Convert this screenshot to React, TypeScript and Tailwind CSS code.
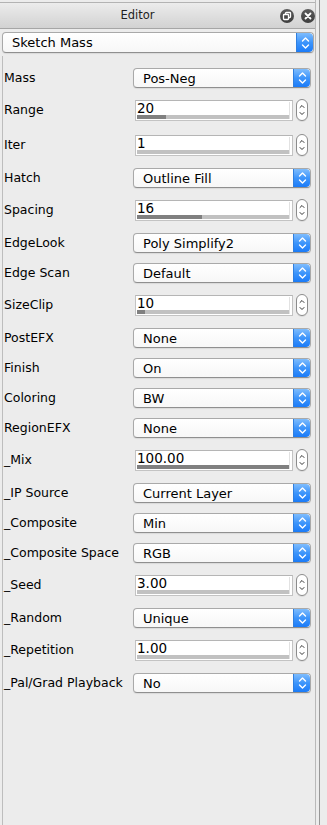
import React from "react";

type Row =
  | { label: string; type: "dd"; value: string }
  | { label: string; type: "spin"; value: string; fill: number };

const rows: Row[] = [
  { label: "Mass", type: "dd", value: "Pos-Neg" },
  { label: "Range", type: "spin", value: "20", fill: 19 },
  { label: "Iter", type: "spin", value: "1", fill: 0 },
  { label: "Hatch", type: "dd", value: "Outline Fill" },
  { label: "Spacing", type: "spin", value: "16", fill: 43 },
  { label: "EdgeLook", type: "dd", value: "Poly Simplify2" },
  { label: "Edge Scan", type: "dd", value: "Default" },
  { label: "SizeClip", type: "spin", value: "10", fill: 5 },
  { label: "PostEFX", type: "dd", value: "None" },
  { label: "Finish", type: "dd", value: "On" },
  { label: "Coloring", type: "dd", value: "BW" },
  { label: "RegionEFX", type: "dd", value: "None" },
  { label: "_Mix", type: "spin", value: "100.00", fill: 100 },
  { label: "_IP Source", type: "dd", value: "Current Layer" },
  { label: "_Composite", type: "dd", value: "Min" },
  { label: "_Composite Space", type: "dd", value: "RGB" },
  { label: "_Seed", type: "spin", value: "3.00", fill: 0 },
  { label: "_Random", type: "dd", value: "Unique" },
  { label: "_Repetition", type: "spin", value: "1.00", fill: 0 },
  { label: "_Pal/Grad Playback", type: "dd", value: "No" },
];

const font = { fontFamily: '"DejaVu Sans", "Liberation Sans", sans-serif' };

function BlueArrows() {
  return (
    <div className="w-[17px] h-full rounded-r-[4px] bg-gradient-to-b from-[#7dbcfd] via-[#3d95fb] to-[#1a7bf8] border-l border-[#2f7fe0] flex items-center justify-center">
      <svg width="9" height="14" viewBox="0 0 9 14" fill="none">
        <path d="M1.5 5 L4.5 2 L7.5 5" stroke="white" strokeWidth="1.4" strokeLinecap="round" strokeLinejoin="round" />
        <path d="M1.5 9 L4.5 12 L7.5 9" stroke="white" strokeWidth="1.4" strokeLinecap="round" strokeLinejoin="round" />
      </svg>
    </div>
  );
}

function Dropdown({ value, className, textClass }: { value: string; className: string; textClass: string }) {
  return (
    <div
      className={`flex h-[20px] rounded-[4px] border border-[#a9a9a9] border-b-[#8f8f8f] bg-gradient-to-b from-white to-[#f7f7f7] shadow-[0_1px_1px_rgba(0,0,0,0.08)] overflow-hidden ${className}`}
    >
      <div className={`flex-1 flex items-center text-black leading-none ${textClass}`}>{value}</div>
      <BlueArrows />
    </div>
  );
}

function SpinButton() {
  return (
    <div className="w-[12px] h-[22px] rounded-full border border-[#8c8c8c] bg-white flex items-center justify-center shadow-[0_1px_0_rgba(0,0,0,0.08)]">
      <svg width="8" height="16" viewBox="0 0 8 16" fill="none">
        <path d="M2 5.5 L4 3.5 L6 5.5" stroke="#333" strokeWidth="1" strokeLinecap="round" strokeLinejoin="round" />
        <path d="M2 10.5 L4 12.5 L6 10.5" stroke="#333" strokeWidth="1" strokeLinecap="round" strokeLinejoin="round" />
      </svg>
    </div>
  );
}

function Spinner({ value, fill }: { value: string; fill: number }) {
  return (
    <div className="flex items-center">
      <div className="ml-[2px] w-[158px] h-[21px] border border-[#c3c3c3] border-t-[#b5b5b5] bg-white relative flex flex-col">
        <div className="flex-1 pl-[1px] pt-[1px] text-[13.5px] leading-none text-black">{value}</div>
        <div className="mx-[1px] mb-[1px] w-[152px] h-[5px] bg-[#c1c1c1]">
          <div className="h-full bg-[#808080]" style={{ width: `${fill}%` }} />
        </div>
        <div className="absolute right-[2px] top-[1px] bottom-[1px] w-[1px] bg-[#e2e2e2]" />
      </div>
      <div className="ml-[3px]">
        <SpinButton />
      </div>
    </div>
  );
}

export default function App() {
  return (
    <div className="w-[327px] h-[825px] bg-[#ececec] flex overflow-hidden" style={font}>
      <div className="w-[316px] h-full border-r border-[#b9b9b9] flex flex-col">
        <div className="h-[2px]" />
        <div className="h-[1px] bg-[#b3b3b3]" />
        <div className="h-[26px] bg-gradient-to-b from-[#ececec] to-[#d2d2d2] border-b border-[#a6a6a6] flex items-center relative">
          <div className="w-[275px] text-center text-[11.5px] text-[#1e1e1e] leading-none">Editor</div>
          <div className="flex items-center gap-[7px] ml-[5px]">
            <div className="w-[14px] h-[14px] rounded-full bg-gradient-to-b from-[#5c5c5c] to-[#3e3e3e] flex items-center justify-center">
              <svg width="10" height="10" viewBox="0 0 10 10" fill="none">
                <rect x="3.5" y="1.5" width="5" height="5" rx="0.8" stroke="white" strokeWidth="1.3" />
                <rect x="1.5" y="3.5" width="5" height="5" rx="0.8" stroke="white" strokeWidth="1.3" fill="#474747" />
              </svg>
            </div>
            <div className="w-[14px] h-[14px] rounded-full bg-gradient-to-b from-[#5c5c5c] to-[#3e3e3e] flex items-center justify-center">
              <svg width="10" height="10" viewBox="0 0 10 10" fill="none">
                <path d="M2.5 2.5 L7.5 7.5 M7.5 2.5 L2.5 7.5" stroke="white" strokeWidth="1.8" strokeLinecap="round" />
              </svg>
            </div>
          </div>
        </div>
        <div className="mt-[3px] pl-[2px] pr-[1px]">
          <Dropdown value="Sketch Mass" className="w-full h-[21px]" textClass="pl-[9px] text-[13px]" />
        </div>
        <div className="mt-[3px] flex-1 ml-[2px] border-l border-[#bdbdbd] flex flex-col pt-[7px]">
          {rows.map((r) => (
            <div
              key={r.label}
              className={`flex ${r.type === "dd" ? "h-[30px] items-center" : "h-[35px] items-start pt-[6px]"}`}
            >
              <div
                className={`w-[130px] pl-[1px] text-[12.5px] text-black leading-none ${r.type === "spin" ? "mt-[5px]" : ""}`}
              >
                {r.label}
              </div>
              {r.type === "dd" ? (
                <Dropdown value={r.value} className="w-[178px]" textClass="pl-[9px] text-[13px]" />
              ) : (
                <Spinner value={r.value} fill={r.fill} />
              )}
            </div>
          ))}
        </div>
      </div>
      <div className="w-[3px]" />
      <div className="w-[1px] h-full bg-[#979797]" />
      <div className="flex-1" />
    </div>
  );
}
